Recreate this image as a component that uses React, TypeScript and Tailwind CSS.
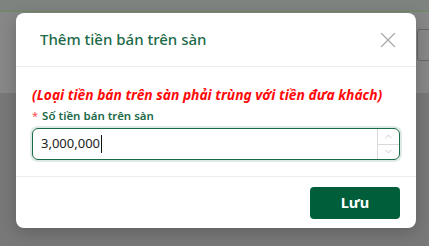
import { X, ChevronUp, ChevronDown } from 'lucide-react';

const font = { fontFamily: '"Noto Sans", "Open Sans", sans-serif' };

export default function App() {
  return (
    <div className="relative h-[246px] w-[429px] overflow-hidden" style={font}>
      {/* page behind the overlay */}
      <div className="flex h-full flex-col">
        <div className="h-[11px] bg-[#7f8380]" />
        <div className="h-px bg-[#6f8a5f]" />
        <div className="relative h-[81px] bg-[#878787]">
          <div className="absolute right-[-4px] top-[17px] h-[32px] w-[16px] rounded-[3px] border border-[#666]" />
        </div>
        <div className="flex-1 bg-[#787878]" />
      </div>

      {/* modal */}
      <div className="absolute left-[16px] top-[13px] flex w-[400px] flex-col rounded-[8px] bg-white shadow-[0_4px_16px_rgba(0,0,0,0.2)]">
        <div className="flex h-[54px] items-center justify-between border-b border-[#ececec] pl-[24px] pr-[15px]">
          <h2 className="text-[15px] font-medium text-[#1c6a47]">Thêm tiền bán trên sàn</h2>
          <X size={26} strokeWidth={1.1} className="text-[#a8a8a8]" />
        </div>

        <div className="px-[16px] pb-[16px] pt-[18px]">
          <p className="text-[13.8px] font-bold italic leading-[20px] text-[#ff0a0a]">
            (Loại tiền bán trên sàn phải trùng với tiền đưa khách)
          </p>
          <label className="mt-[1px] flex items-center gap-[4px] text-[11.5px] font-semibold leading-[20px] text-[#1c6a47]">
            <span className="text-[11px] font-normal text-[#ff4d4f]">*</span>
            Số tiền bán trên sàn
          </label>
          <div className="mt-[2px] flex h-[32px] items-stretch rounded-[6px] border border-[#1c6a47] shadow-[0_0_0_2px_rgba(28,106,71,0.15)]">
            <div className="flex flex-1 items-center pl-[8px] text-[13px] text-[#222]">
              3,000,000
              <span className="ml-px h-[18px] w-px bg-[#111]" />
            </div>
            <div className="flex w-[22px] flex-col border-l border-[#d9d9d9]">
              <div className="flex flex-1 items-center justify-center border-b border-[#d9d9d9] text-[#b0b0b0]">
                <ChevronUp size={11} strokeWidth={1.5} />
              </div>
              <div className="flex flex-1 items-center justify-center text-[#b0b0b0]">
                <ChevronDown size={11} strokeWidth={1.5} />
              </div>
            </div>
          </div>
        </div>

        <div className="flex h-[52px] items-center justify-end border-t border-[#ececec] px-[16px]">
          <button className="h-[32px] w-[90px] rounded-[4px] bg-[#005f3a] text-[14.5px] font-bold text-white">
            Lưu
          </button>
        </div>
      </div>
    </div>
  );
}
